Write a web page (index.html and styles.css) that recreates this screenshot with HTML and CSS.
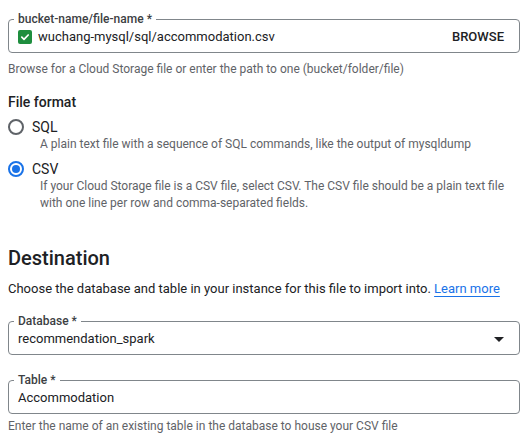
FILE: index.html
```html
<!DOCTYPE html>
<html lang="en">
<head>
<meta charset="utf-8">
<title>Import</title>
<link rel="stylesheet" href="styles.css">
</head>
<body>
<main class="form">
  <fieldset class="field">
    <legend>bucket-name/file-name *</legend>
    <div class="row">
      <span class="check-ok">
        <svg viewBox="0 0 14 14" width="14" height="14"><path d="M3.8 7.2 L6 9.3 L10.2 5" fill="none" stroke="#fff" stroke-width="1.7" stroke-linecap="round" stroke-linejoin="round"/></svg>
      </span>
      <span class="value">wuchang-mysql/sql/accommodation.csv</span>
      <span class="browse">BROWSE</span>
    </div>
  </fieldset>
  <p class="hint hint-file">Browse for a Cloud Storage file or enter the path to one (bucket/folder/file)</p>

  <h3 class="group-title">File format</h3>
  <div class="radio-list">
    <div class="radio-item">
      <div class="radio-row"><span class="radio"></span><span>SQL</span></div>
      <p class="radio-hint">A plain text file with a sequence of SQL commands, like the output of mysqldump</p>
    </div>
    <div class="radio-item radio-item-csv">
      <div class="radio-row"><span class="radio checked"></span><span>CSV</span></div>
      <p class="radio-hint">If your Cloud Storage file is a CSV file, select CSV. The CSV file should be a plain text file with one line per row and comma-separated fields.</p>
    </div>
  </div>

  <h2 class="section-title">Destination</h2>
  <p class="section-desc">Choose the database and table in your instance for this file to import into. <a href="#" class="link">Learn more</a></p>

  <fieldset class="field field-db">
    <legend>Database *</legend>
    <div class="row">
      <span class="value">recommendation_spark</span>
      <svg class="caret" viewBox="0 0 10 5" width="10" height="5"><path d="M0 0 H10 L5 5 Z" fill="#202124"/></svg>
    </div>
  </fieldset>

  <fieldset class="field field-table">
    <legend>Table *</legend>
    <div class="row">
      <span class="value">Accommodation</span>
    </div>
  </fieldset>
  <p class="hint hint-table">Enter the name of an existing table in the database to house your CSV file</p>
</main>
</body>
</html>
```

FILE: styles.css
```css
body {
  margin: 0;
  background: #fff;
  color: #202124;
  font-family: Roboto, "Liberation Sans", Arial, sans-serif;
}

.form {
  width: 512px;
  padding: 11px 8px 0;
}

.field {
  margin: 0;
  padding: 0 15px 5px 9px;
  border: 1px solid #80868b;
  border-radius: 4px;
  min-width: 0;
}

.field legend {
  margin-left: -4px;
  padding: 0 4px;
  font-size: 12px;
  line-height: 16px;
  font-weight: 500;
  color: #3c4043;
}

.row {
  display: flex;
  align-items: center;
  height: 20px;
  font-size: 13px;
  line-height: 20px;
}

.value {
  flex: 1;
  color: #202124;
}

.check-ok {
  display: flex;
  width: 14px;
  height: 14px;
  margin-right: 6px;
  border-radius: 2px;
  background: #1e8e3e;
}

.browse {
  font-size: 13px;
  font-weight: 500;
  color: #202124;
}

.hint {
  margin: 0;
  font-size: 12px;
  line-height: 16px;
  color: #5f6368;
}

.hint-file {
  margin-top: 8px;
}

.group-title {
  margin: 15px 0 0;
  font-size: 14px;
  line-height: 20px;
  font-weight: 500;
}

.radio-list {
  margin-top: 6px;
}

.radio-item-csv {
  margin-top: 8px;
}

.radio-row {
  display: flex;
  align-items: center;
  gap: 8px;
  font-size: 14px;
  line-height: 18px;
}

.radio {
  box-sizing: border-box;
  width: 16px;
  height: 16px;
  border: 2px solid #5f6368;
  border-radius: 50%;
  display: flex;
  align-items: center;
  justify-content: center;
}

.radio.checked {
  border-color: #1a73e8;
}

.radio.checked::after {
  content: "";
  width: 8px;
  height: 8px;
  border-radius: 50%;
  background: #1a73e8;
}

.radio-hint {
  margin: 0 0 0 32px;
  font-size: 12px;
  line-height: 17px;
  color: #5f6368;
}

.radio-item:first-child .radio-hint {
  line-height: 16px;
}

.section-title {
  margin: 32px 0 0;
  font-size: 20px;
  line-height: 28px;
  font-weight: 500;
}

.section-desc {
  margin: 7px 0 0;
  font-size: 13px;
  line-height: 20px;
  color: #202124;
}

.link {
  color: #1a73e8;
  text-decoration: underline;
  text-underline-offset: 3px;
}

.field-db {
  margin-top: 14px;
}

.field-table {
  margin-top: 17px;
}

.hint-table {
  margin-top: 4px;
}
```
